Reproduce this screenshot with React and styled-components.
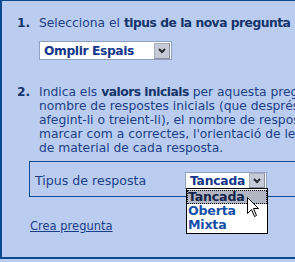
import React from "react";
import styled, { createGlobalStyle } from "styled-components";

const Global = createGlobalStyle`
  html, body {
    margin: 0;
    padding: 0;
    overflow: hidden;
    background: #bacdf0;
  }
  body {
    font-family: "DejaVu Sans", Verdana, sans-serif;
  }
`;

const Panel = styled.div`
  width: 460px;
  height: 259px;
  background: #bacdf0;
  border-top: 1px solid #0c4a90;
  border-left: 2px solid #0c4a90;
  border-bottom: 2px solid #0c4a90;
  padding: 15px 0 0 15px;
  box-sizing: border-box;
  color: #1f3f86;
  font-size: 12.3px;
  line-height: 14px;
`;

const Step = styled.div`
  display: flex;
  margin-bottom: ${(p) => p.$gap || 0}px;
`;

const Num = styled.div`
  width: 22px;
  flex: none;
  font-weight: bold;
  color: #16346a;
`;

const Body = styled.div`
  flex: 1;
  white-space: nowrap;
  b {
    color: #16346a;
    letter-spacing: -0.5px;
  }
`;

const SelectBox = styled.div`
  position: relative;
  display: flex;
  align-items: center;
  box-sizing: border-box;
  width: ${(p) => p.$w}px;
  height: ${(p) => p.$h}px;
  margin-top: ${(p) => p.$mt || 0}px;
  background: #fff;
  border: 1px solid #8ea2c0;
  font-weight: bold;
  font-size: 12.3px;
  letter-spacing: ${(p) => p.$ls || 0}px;
  color: #13378a;
  padding-left: 4px;
`;

const Value = styled.span`
  flex: 1;
`;

const DropBtn = styled.span`
  display: flex;
  align-items: center;
  justify-content: center;
  width: 16px;
  height: ${(p) => p.$h}px;
  margin-right: 1px;
  box-sizing: border-box;
  background: #c6cad6;
  border: 1px solid #a8aebc;
  border-right-color: #8a90a0;
  border-bottom-color: #8a90a0;
`;

const Chevron = () => (
  <svg width="8" height="6" viewBox="0 0 8 6">
    <polyline points="1,1 4,4 7,1" fill="none" stroke="#2a2a30" strokeWidth="2" />
  </svg>
);

const OptionsBox = styled.div`
  margin: 6px 0 0 12px;
  border: 1px solid #0c4a90;
  border-right: none;
  padding: 10px 0 7px 5px;
  display: grid;
  grid-template-columns: 150px auto;
  align-items: center;
  font-size: 12.6px;
`;

const Label = styled.span`
  color: #1f3f86;
`;

const ListBox = styled.div`
  position: absolute;
  top: 100%;
  left: 0;
  width: 82px;
  box-sizing: border-box;
  background: #fff;
  border: 1px solid #000;
  padding: 1px 0;
  z-index: 2;
`;

const Option = styled.div`
  height: 14px;
  line-height: 13px;
  padding-left: 1px;
  box-sizing: border-box;
  font-weight: bold;
  font-size: 12.6px;
  letter-spacing: -0.2px;
  color: ${(p) => (p.$active ? "#15244c" : "#1550a8")};
  background: ${(p) => (p.$active ? "#b2b5c2" : "transparent")};
  outline: ${(p) => (p.$active ? "1px dotted #000" : "none")};
  outline-offset: -1px;
`;

const Cursor = styled.svg`
  position: absolute;
  left: 61px;
  top: 24px;
  z-index: 3;
`;

const Link = styled.a`
  display: inline-block;
  margin: 22px 0 0 13px;
  font-size: 11.5px;
  color: #1a3d86;
  text-decoration: underline;
`;

export default function App() {
  return (
    <>
      <Global />
      <Panel>
        <Step $gap={25}>
          <Num>1.</Num>
          <Body>
            Selecciona el <b>tipus de la nova pregunta</b>
            <SelectBox $w={133} $h={19} $mt={11} $ls={-0.4}>
              <Value>Omplir Espais</Value>
              <DropBtn $h={16}>
                <Chevron />
              </DropBtn>
            </SelectBox>
          </Body>
        </Step>
        <Step>
          <Num>2.</Num>
          <Body>
            Indica els <b>valors inicials</b> per aquesta pregunta: el
            <br />
            nombre de respostes inicials (que després podràs modificar
            <br />
            afegint-li o treient-li), el nombre de respostes que es poden
            <br />
            marcar com a correctes, l'orientació de les respostes i el tipus
            <br />
            de material de cada resposta.
          </Body>
        </Step>
        <OptionsBox>
          <Label>Tipus de resposta</Label>
          <SelectBox $w={82} $h={17} $ls={-0.2}>
            <Value>Tancada</Value>
            <DropBtn $h={15}>
              <Chevron />
            </DropBtn>
            <ListBox>
              <Option $active>Tancada</Option>
              <Option>Oberta</Option>
              <Option>Mixta</Option>
            </ListBox>
            <Cursor width="13" height="21" viewBox="0 0 13 21">
              <path
                d="M0.5,0.5 L0.5,16.5 L4.5,12.5 L7.5,19.5 L9.5,18.5 L6.5,11.5 L11.5,11.5 Z"
                fill="#fff"
                stroke="#000"
                strokeWidth="1"
              />
            </Cursor>
          </SelectBox>
        </OptionsBox>
        <Link href="#">Crea pregunta</Link>
      </Panel>
    </>
  );
}
